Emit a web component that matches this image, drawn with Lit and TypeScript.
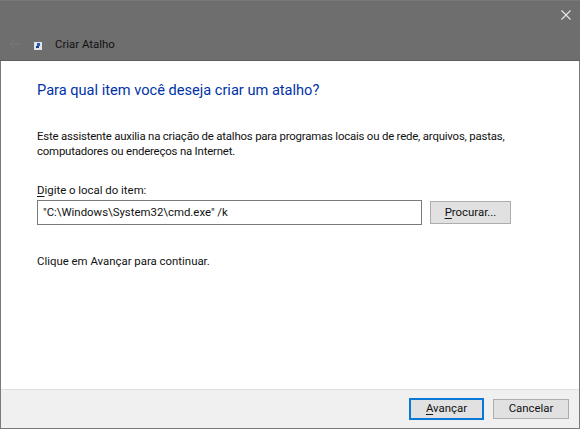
import { LitElement, html, css } from "lit";
import { customElement } from "lit/decorators.js";

@customElement("app-root")
export class AppRoot extends LitElement {
  static styles = css`
    :host {
      display: block;
      width: 580px;
      height: 429px;
      font-family: Roboto, "Noto Sans", sans-serif;
      font-size: 11.4px;
      color: #111;
    }
    .window {
      box-sizing: border-box;
      width: 580px;
      height: 429px;
      display: flex;
      flex-direction: column;
      background: #fff;
      border: 1px solid #7a7a7a;
      border-top: 0;
    }
    .head {
      height: 61px;
      box-sizing: border-box;
      margin: 0 -1px;
      background: #6e6e6e;
      border-top: 1px solid #777;
      border-bottom: 1px solid #5e5e5e;
      display: flex;
      flex-direction: column;
    }
    .close-row {
      display: flex;
      justify-content: flex-end;
      padding: 9px 9px 0 0;
      height: 12px;
    }
    .title-row {
      display: flex;
      align-items: center;
      margin-top: 10px;
      height: 22px;
      padding-left: 9px;
    }
    .back { width: 13px; height: 12px; margin-right: 12px; margin-top: 1px; }
    .app-icon { width: 8px; height: 8px; margin-top: 6px; margin-right: 13px; }
    .cap { color: #111; font-size: 11.4px; margin-top: 1px; }
    .body {
      flex: 1;
      display: flex;
      flex-direction: column;
      padding: 20px 36px 0;
    }
    h1 {
      margin: 0;
      font-weight: 400;
      font-size: 14.6px;
      line-height: 18px;
      color: #0033a8;
    }
    .intro {
      margin: 30px 0 0;
      line-height: 15px;
      width: 490px;
      letter-spacing: -0.19px;
    }
    .field-label { margin-top: 24px; line-height: 15px; }
    .field-row {
      display: flex;
      gap: 8px;
      margin-top: 2px;
      align-items: center;
    }
    .input {
      box-sizing: border-box;
      width: 385px;
      height: 25px;
      border: 1px solid #7a7a7a;
      padding: 0 5px;
      line-height: 22px;
      white-space: nowrap;
    }
    .btn {
      box-sizing: border-box;
      width: 81px;
      height: 23px;
      background: #e1e1e1;
      border: 1px solid #adadad;
      text-align: center;
      line-height: 20px;
      color: #111;
    }
    .hint { margin-top: 29px; line-height: 15px; }
    u { text-underline-offset: 1.5px; }
    .foot {
      height: 39px;
      box-sizing: border-box;
      background: #f0f0f0;
      border-top: 1px solid #dfdfdf;
      display: flex;
      justify-content: flex-end;
      align-items: center;
      gap: 9px;
      padding: 0 10px 0 0;
    }
    .foot .btn { width: 76px; height: 20px; line-height: 17px; }
    .foot .primary {
      width: 75px;
      height: 22px;
      border: 2px solid #0a78d7;
      line-height: 17px;
    }
  `;

  render() {
    return html`
      <div class="window">
        <div class="head">
          <div class="close-row">
            <svg width="10" height="10" viewBox="0 0 10 10">
              <path d="M.5.5l9 9M9.5.5l-9 9" stroke="#e8e8e8" stroke-width="1.1" fill="none" />
            </svg>
          </div>
          <div class="title-row">
            <svg class="back" viewBox="0 0 13 12">
              <path d="M6 1L1 6l5 5M1 6h12" stroke="#757575" stroke-width="1.5" fill="none" />
            </svg>
            <svg class="app-icon" viewBox="0 0 8 8">
              <rect width="8" height="8" fill="#dfe3ea" />
              <rect x="3" y="1" width="3" height="3" fill="#2a5db0" />
              <rect x="2" y="4" width="3" height="2" fill="#1c3f86" />
            </svg>
            <span class="cap">Criar Atalho</span>
          </div>
        </div>
        <div class="body">
          <h1>Para qual item você deseja criar um atalho?</h1>
          <p class="intro">
            Este assistente auxilia na criação de atalhos para programas locais ou de rede, arquivos, pastas,
            computadores ou endereços na Internet.
          </p>
          <div class="field-label"><u>D</u>igite o local do item:</div>
          <div class="field-row">
            <div class="input">"C:\\Windows\\System32\\cmd.exe" /k</div>
            <div class="btn"><u>P</u>rocurar...</div>
          </div>
          <div class="hint">Clique em Avançar para continuar.</div>
        </div>
        <div class="foot">
          <div class="btn primary"><u>A</u>vançar</div>
          <div class="btn">Cancelar</div>
        </div>
      </div>
    `;
  }
}
